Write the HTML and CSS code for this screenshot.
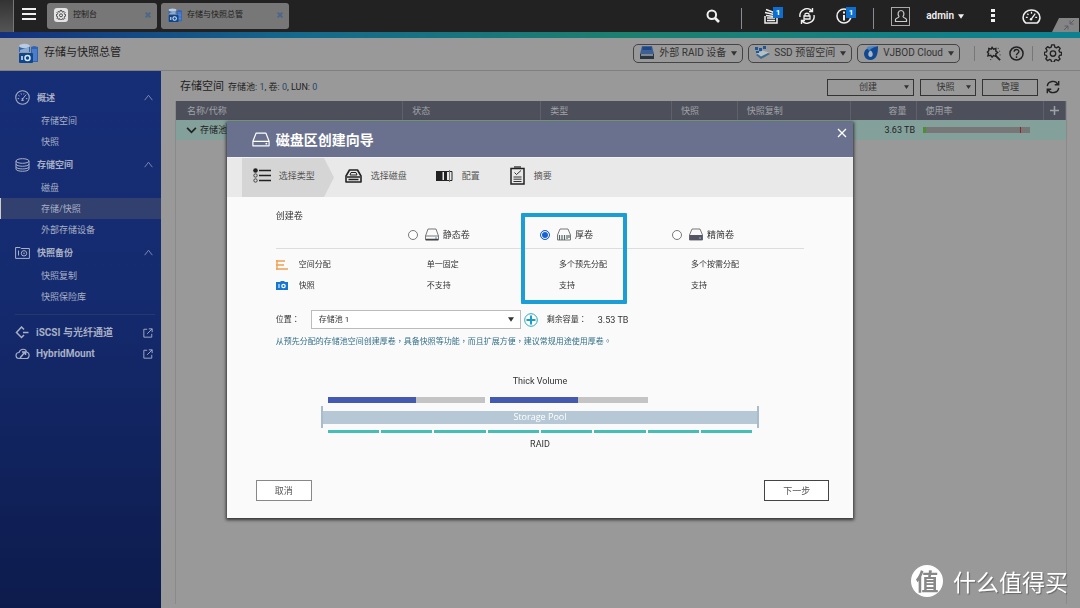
FILE: index.html
```html
<!DOCTYPE html>
<html lang="zh-CN">
<head>
<meta charset="utf-8">
<title>存储与快照总管</title>
<meta name="viewport" content="width=device-width, initial-scale=1">
<link rel="stylesheet" href="styles.css">
</head>
<body>
<svg class="defs" aria-hidden="true">
  <symbol id="i-app" viewBox="0 0 20 20">
    <path d="M1 3v6h11V3z" fill="#2a66b5"/><ellipse cx="6.500" cy="3" rx="5.500" ry="2.200" fill="#b9cbe0"/>
    <path d="M2 7l9-3v5H2z" fill="#8fa9cc"/>
    <path d="M13 4l3-1 4 1v15h-7z" fill="#2e63b8"/><path d="M14 7h5M14 9h5M14 11h5M14 13h5M14 15h5M14 17h5" stroke="#6f98d4" stroke-width="1"/>
    <rect x="1" y="10" width="14" height="10" rx="1" fill="#0d478f"/><path d="M4 13v4" stroke="#dce6f2" stroke-width="1.500"/><circle cx="9.500" cy="15" r="2.500" fill="none" stroke="#dce6f2" stroke-width="1.500"/>
  </symbol>
  <symbol id="i-gear" viewBox="0 0 20 20">
    <path d="M8.500 1h3l.5 2.500 1.800.8L16 2.900 18 5l-1.400 2.200.7 1.700 2.200.5v2.800l-2.300.5-.8 1.800 1.400 2.100-2 2-2.200-1.300-1.700.7-.5 2.300h-3l-.5-2.400-1.700-.7L4 18.500 2 16.500l1.300-2.200-.7-1.700-2.200-.5V9.300l2.300-.5.7-1.700L2 5l2-2 2.200 1.300L8 3.500z" fill="none" stroke="currentColor" stroke-width="1.500" stroke-linejoin="round"/><circle cx="10" cy="10.600" r="3" fill="none" stroke="currentColor" stroke-width="1.500"/>
  </symbol>
  <symbol id="i-gauge" viewBox="0 0 20 20">
    <circle cx="10" cy="10" r="9" fill="none" stroke="currentColor" stroke-width="1.400"/>
    <path d="M3.500 11.500h2M4.500 7l1.500 1M8 4.500l.6 1.600M12 4.500l-.4 1.400M16.500 11.500h-2M8.500 14h3M10 12l5-6" fill="none" stroke="currentColor" stroke-width="1.300"/><circle cx="10" cy="12" r="1.300" fill="currentColor"/>
  </symbol>
  <symbol id="i-halfgauge" viewBox="0 0 20 16">
    <path d="M4 15h12c2-1.500 3-3.500 3-6a9 8 0 0 0-18 0c0 2.500 1 4.500 3 6z" fill="none" stroke="currentColor" stroke-width="1.600" stroke-linejoin="round"/>
    <path d="M4 9h2M5.500 5l1.300 1.200M10 3v2M16 9h-2M9.500 11L14 5" fill="none" stroke="currentColor" stroke-width="1.400"/><circle cx="9.500" cy="11" r="1.300" fill="currentColor"/>
  </symbol>
  <symbol id="i-drive" viewBox="0 0 20 16">
    <path d="M4.500 1h11L19 10v5H1v-5zM1 10h18" fill="none" stroke="currentColor" stroke-width="1.300" stroke-linejoin="round"/><circle cx="16" cy="12.600" r="1" fill="currentColor"/>
  </symbol>
  <symbol id="i-ext" viewBox="0 0 12 12">
    <path d="M5 1.500H1v9.500h9.500V7M7 1h4v4M11 1L5 7" fill="none" stroke="currentColor" stroke-width="1.100"/>
  </symbol>
  <symbol id="i-up" viewBox="0 0 10 7"><path d="M.7 6.500L5 1l4.300 5.500" fill="none" stroke="currentColor" stroke-width="1"/></symbol>
  <symbol id="i-tri" viewBox="0 0 8 6"><path d="M0 0h8L4 6z" fill="currentColor"/></symbol>
  <symbol id="i-x" viewBox="0 0 10 10"><path d="M1 1l8 8M9 1L1 9" fill="none" stroke="currentColor" stroke-width="1.300"/></symbol>
  <symbol id="i-xb" viewBox="0 0 10 10"><path d="M1 1l8 8M9 1L1 9" fill="none" stroke="currentColor" stroke-width="3.200"/></symbol>
</svg>

<header class="topbar">
  <span class="peek"></span>
  <button class="plain burger" aria-label="主菜单"><svg viewBox="0 0 14 12" width="14" height="12"><path d="M0 1h14M0 6h14M0 11h14" stroke="currentColor" stroke-width="2"/></svg></button>
  <nav class="tabs">
    <div class="tab"><span class="tab-gear"><svg width="10" height="10"><use href="#i-gear"/></svg></span><span class="tab-name">控制台</span><button class="plain tab-x" aria-label="关闭控制台"><svg width="6" height="6"><use href="#i-xb"/></svg></button></div>
    <div class="tab tab-wide"><svg width="14" height="14"><use href="#i-app"/></svg><span class="tab-name">存储与快照总管</span><button class="plain tab-x" aria-label="关闭存储与快照总管"><svg width="6" height="6"><use href="#i-xb"/></svg></button></div>
  </nav>
  <div class="tools">
    <button class="plain" aria-label="搜索"><svg viewBox="0 0 14 14" width="14" height="14"><circle cx="5.800" cy="5.800" r="4.300" fill="none" stroke="currentColor" stroke-width="2"/><path d="M9 9l4 4" stroke="currentColor" stroke-width="2.600"/></svg></button>
    <span class="bar"></span>
    <button class="plain badged" aria-label="后台任务"><svg viewBox="0 0 15 16" width="15" height="16"><path d="M2 8v7h12V8M4 12.500h8M4 10h8M3 7.500l8 1M2 4.500l9 2M3 1.500l8 3" fill="none" stroke="currentColor" stroke-width="1.500"/></svg><span class="badge">1</span></button>
    <button class="plain" aria-label="外接设备"><svg viewBox="0 0 16 16" width="16" height="16"><path d="M1 9a7 7 0 0 1 12-6M15 7a7 7 0 0 1-12 6M13.500 0v3.500H10M2.500 16v-3.500H6" fill="none" stroke="currentColor" stroke-width="1.400"/><path d="M5 8h6v3H5zM6 8V6c0-1.200 4-1.200 4 0v2" fill="none" stroke="currentColor" stroke-width="1.300"/></svg></button>
    <button class="plain badged" aria-label="通知"><svg viewBox="0 0 16 16" width="16" height="16"><circle cx="8" cy="8" r="7" fill="none" stroke="currentColor" stroke-width="1.500"/><path d="M8 3.500v2M8 7v5.500" stroke="currentColor" stroke-width="2"/></svg><span class="badge">1</span></button>
    <span class="bar"></span>
  </div>
  <div class="account">
    <span class="avatar"><svg viewBox="0 0 14 14" width="14" height="14"><path d="M5 7.500C3.300 5 4 1.500 7 1.500S10.700 5 9 7.500c0 1.500 3.500 1.500 3.500 3v2h-11v-2c0-1.500 3.500-1.500 3.500-3z" fill="none" stroke="currentColor" stroke-width="1.200"/></svg></span>
    <button class="plain user">admin <svg width="6" height="5"><use href="#i-tri"/></svg></button>
    <button class="plain dots" aria-label="更多"><svg viewBox="0 0 4 14" width="4" height="14"><path d="M0 0h4v3H0zM0 5h4v3H0zM0 10h4v3H0z" fill="currentColor"/></svg></button>
    <button class="plain" aria-label="仪表板"><svg width="19" height="15"><use href="#i-halfgauge"/></svg></button>
  </div>
  <button class="plain corner" aria-label="还原"><svg viewBox="0 0 27 14" width="27" height="14"><path d="M7 0h20v14H0z" fill="#858585"/><path d="M12 12l4-4M12.500 8H16v3.500M22 2l-4 4M18 2.500V6h3.500" fill="none" stroke="#5c5c68" stroke-width="1"/></svg></button>
</header>
<div class="rainbow"></div>

<div class="apphead">
  <svg class="applogo" width="20" height="20"><use href="#i-app"/></svg>
  <h1>存储与快照总管</h1>
  <div class="pills">
    <button class="pill"><svg viewBox="0 0 16 14" width="16" height="14"><path d="M3 0h10l2 8H1z" fill="#3c5f94"/><path d="M3.500 1h9v3h-9z" fill="#1f4587"/><path d="M1 8h14v5H1z" fill="#2c3440"/><path d="M2 8h12v2H2z" fill="#7f8791"/></svg>外部 RAID 设备<svg class="tri" width="6" height="5"><use href="#i-tri"/></svg></button>
    <button class="pill"><svg viewBox="0 0 16 14" width="16" height="14"><path d="M2 9l8-4 6 3-9 5z" fill="#3f6a8c"/><path d="M3 7.500l6-3 6 2-8 4z" fill="#b5bfc6"/><path d="M1 1h3v3H1zM5 2h3v3H5zM9 0h3v3H9zM2 5h3v2H2z" fill="#1a5699"/></svg>SSD 预留空间<svg class="tri" width="6" height="5"><use href="#i-tri"/></svg></button>
    <button class="pill"><svg viewBox="0 0 16 14" width="16" height="14"><path d="M15 0c0 7-1 14-8 14a6 6 0 0 1-6-6c0-6 7-7 14-8z" fill="#12488f"/><path d="M4 1c3-1 6-1 11-1-3 1-7 2-9 5z" fill="#4c86c6"/><path d="M7.500 4.500c3 2 3 6 0 6.500-3-.5-3-4.500 0-6.500z" fill="#a9b8c8"/></svg>VJBOD Cloud<svg class="tri" width="6" height="5"><use href="#i-tri"/></svg></button>
  </div>
  <div class="headicons">
    <span class="sep"></span>
    <button class="plain" aria-label="向导"><svg viewBox="0 0 16 16" width="15" height="15"><path d="M6.500 1.500l1.500 2 2.500-.8v2.800l2 1.500-2 1.500v2.500L8 10.300 6.500 12 5 10l-3 .5.800-2.500L1.500 6.500 3 5V2.500l2.500.8z" fill="none" stroke="currentColor" stroke-width="1.500"/><path d="M10 10l5 5" stroke="currentColor" stroke-width="2"/><path d="M13 2v1M14.500 5v1M15 9v1M5 14v1" stroke="currentColor" stroke-width="1"/></svg></button>
    <button class="plain" aria-label="帮助"><svg viewBox="0 0 16 16" width="15" height="15"><circle cx="8" cy="8" r="7" fill="none" stroke="currentColor" stroke-width="1.600"/><path d="M5.500 6.200c0-3.200 5-3.200 5-.2 0 1.700-2.500 1.800-2.500 3.800M8 11v1.700" fill="none" stroke="currentColor" stroke-width="1.500"/></svg></button>
    <span class="sep"></span>
    <button class="plain" aria-label="设置"><svg width="18" height="18"><use href="#i-gear"/></svg></button>
  </div>
</div>

<div class="app">
  <nav class="side">
    <button class="plain group"><svg width="15" height="15"><use href="#i-gauge"/></svg><span>概述</span><svg width="9" height="7"><use href="#i-up"/></svg></button>
    <a href="#" class="sub">存储空间</a>
    <a href="#" class="sub">快照</a>
    <button class="plain group"><svg viewBox="0 0 15 14" width="15" height="14"><ellipse cx="7.500" cy="3" rx="6.500" ry="2.300" fill="none" stroke="currentColor"/><path d="M1 3v8c0 3 13 3 13 0V3M1 6c0 3 13 3 13 0M1 8.700c0 3 13 3 13 0" fill="none" stroke="currentColor"/></svg><span>存储空间</span><svg width="9" height="7"><use href="#i-up"/></svg></button>
    <a href="#" class="sub">磁盘</a>
    <a href="#" class="sub current" aria-current="page">存储/快照</a>
    <a href="#" class="sub">外部存储设备</a>
    <button class="plain group"><svg viewBox="0 0 15 13" width="15" height="13"><path d="M.6 12.400V1.500h4.500l1 1h8.300v9.900zM3.500 4.500v5" fill="none" stroke="currentColor"/><circle cx="9" cy="7.300" r="2.700" fill="none" stroke="currentColor"/><circle cx="9" cy="7.300" r=".8" fill="currentColor"/></svg><span>快照备份</span><svg width="9" height="7"><use href="#i-up"/></svg></button>
    <a href="#" class="sub">快照复制</a>
    <a href="#" class="sub">快照保险库</a>
    <hr class="rule">
    <a href="#" class="ext"><svg viewBox="0 0 15 13" width="15" height="13"><path d="M9 3.500L6.500 1 1.500 6.500l5 5L9 9M8 6.500h5.500" fill="none" stroke="currentColor" stroke-width="1.500"/></svg><span>iSCSI 与光纤通道</span><svg width="10" height="10"><use href="#i-ext"/></svg></a>
    <a href="#" class="ext"><svg viewBox="0 0 15 12" width="15" height="12"><path d="M4 10.500a3 3 0 0 1 0-6C5.500 0 11 .5 11.500 4c4 1 3 6.500 0 6.500z" fill="none" stroke="currentColor" stroke-width="1.100"/><path d="M5 10l5-6M7 4h3.500v3" fill="none" stroke="currentColor" stroke-width="1.500"/></svg><span>HybridMount</span><svg width="10" height="10"><use href="#i-ext"/></svg></a>
  </nav>

  <main class="main">
    <div class="toolbar">
      <h2>存储空间</h2>
      <p class="counts">存储池: <b>1</b>, 卷: <b>0</b>, LUN: <b>0</b></p>
      <button class="cmd cmd-wide"><span>创建</span><svg width="5" height="4"><use href="#i-tri"/></svg></button>
      <button class="cmd"><span>快照</span><svg width="5" height="4"><use href="#i-tri"/></svg></button>
      <button class="cmd"><span>管理</span></button>
      <button class="plain reload" aria-label="刷新"><svg viewBox="0 0 16 16" width="14" height="16"><path d="M1.500 7c.5-6 9.500-7.500 12-2M14.500 9c-.5 6-9.500 7.500-12 2M14.500 1v4.500H10M1.500 15v-4.500H6" fill="none" stroke="currentColor" stroke-width="1.600"/></svg></button>
    </div>
    <div class="gridwrap">
      <table class="pools">
        <colgroup><col class="c1"><col class="c2"><col class="c3"><col class="c4"><col class="c5"><col class="c6"><col><col class="c8"></colgroup>
        <thead><tr><th class="first">名称/代称</th><th>状态</th><th>类型</th><th>快照</th><th>快照复制</th><th class="num">容量</th><th>使用率</th><th class="plus" aria-label="添加列"><svg viewBox="0 0 9 9" width="9" height="9"><path d="M4.500 0v9M0 4.500h9" stroke="currentColor" stroke-width="1.500"/></svg></th></tr></thead>
        <tbody><tr><td class="name"><svg viewBox="0 0 12 8" width="11" height="7"><path d="M1 1l5 5 5-5" fill="none" stroke="currentColor" stroke-width="2"/></svg>存储池 1</td><td></td><td></td><td></td><td></td><td class="size">3.63 TB</td><td class="use"><span class="meter"><i class="ok"></i><i class="limit"></i></span></td><td></td></tr></tbody>
      </table>
    </div>
  </main>
</div>

<div class="layer">
  <section class="dialog" role="dialog" aria-labelledby="dlg">
    <header class="dlg-head">
      <svg width="18" height="15"><use href="#i-drive"/></svg>
      <h2 id="dlg">磁盘区创建向导</h2>
      <button class="plain dlg-x" aria-label="关闭"><svg width="10" height="10"><use href="#i-x"/></svg></button>
    </header>
    <ol class="steps">
      <li class="step active"><svg class="arrow" viewBox="0 0 10 39" preserveAspectRatio="none"><path d="M0 0l10 19.500L0 39z" fill="currentColor"/></svg><svg viewBox="0 0 18 15" width="18" height="15"><circle cx="2.500" cy="2.500" r="2.300" fill="#222"/><circle cx="2.500" cy="7.500" r="1.700" fill="none" stroke="#444"/><circle cx="2.500" cy="12.500" r="1.700" fill="none" stroke="#444"/><path d="M6 2.500h12M6 7.500h12M6 12.500h12" stroke="#222" stroke-width="1.300"/></svg>选择类型</li>
      <li class="step disk"><svg viewBox="0 0 17 14" width="17" height="14"><path d="M4.500 1h8L16 7v6H1V7z" fill="none" stroke="#222" stroke-width="1.600" stroke-linejoin="round"/><path d="M2 8h13M3.500 10.500h10" stroke="#222" stroke-width="1.300"/><path d="M5 6l1-2.500h5L12 6z" fill="none" stroke="#222"/></svg>选择磁盘</li>
      <li class="step conf"><svg viewBox="0 0 17 12" width="17" height="12"><path d="M0 1h6v10H0zM8 1h3v10H8z" fill="#222"/><path d="M6 1.500h10v9H6z" fill="none" stroke="#222"/><path d="M13.500 0v12" stroke="#777"/></svg>配置</li>
      <li class="step sum"><svg viewBox="0 0 15 19" width="15" height="19"><path d="M1 2.500h13V18H1z" fill="none" stroke="#222" stroke-width="1.500"/><path d="M4 1h7" stroke="#444" stroke-width="1.500"/><path d="M4.500 6.500l2 2L11 4.500M3.500 11h8M3.500 13.200h8M3.500 15.500h8" fill="none" stroke="#333"/></svg>摘要</li>
    </ol>
    <form class="dlg-body" onsubmit="return false">
      <h3>创建卷</h3>
      <div class="compare-wrap">
        <table class="compare">
          <thead><tr><td class="lead"></td>
            <th><label><input type="radio" name="vol"><svg viewBox="0 0 14 13" width="14" height="13"><path d="M3 1h8l2.500 7v4H.5V8zM.5 8h13" fill="none" stroke="#777"/><path d="M1 11.500h12" stroke="#444" stroke-width="1.500"/><circle cx="11" cy="10" r=".8" fill="#28c"/></svg>静态卷</label></th>
            <th><label><input type="radio" name="vol" checked><svg viewBox="0 0 14 13" width="14" height="13"><path d="M3 1h8l2.500 6v5H.5V7z" fill="none" stroke="#777"/><path d="M2.500 7v5M5 7v5M7.500 7v5M10 7v4M12 7v3" stroke="#566" stroke-width="1.200"/></svg>厚卷</label></th>
            <th><label><input type="radio" name="vol"><svg viewBox="0 0 14 13" width="14" height="13"><path d="M3 1h8l2.500 6v5H.5V7z" fill="none" stroke="#777"/><path d="M.5 7h13v5H.5z" fill="#556"/><circle cx="11" cy="10" r=".8" fill="#8cf"/></svg>精简卷</label></th></tr></thead>
          <tbody>
            <tr><th class="feature"><svg viewBox="0 0 12 10" width="12" height="10"><path d="M1 0v10M0 1h9M0 5h8M0 9h12" fill="none" stroke="#f0a050" stroke-width="1.400"/></svg>空间分配</th><td>单一固定</td><td>多个预先分配</td><td>多个按需分配</td></tr>
            <tr><th class="feature"><svg viewBox="0 0 12 9" width="12" height="9"><path d="M0 1h4l1-1h3l1 1h3v8H0z" fill="#1478d0"/><path d="M3 3v4" stroke="#fff"/><circle cx="7.500" cy="5" r="1.700" fill="none" stroke="#fff" stroke-width="1.200"/></svg>快照</th><td>不支持</td><td>支持</td><td>支持</td></tr>
          </tbody>
        </table>
        <div class="focusbox"></div>
      </div>
      <div class="place">
        <label for="pool">位置<span lang="zh-TW">：</span></label>
        <span class="selwrap"><select id="pool"><option>存储池 1</option></select><svg width="6" height="5"><use href="#i-tri"/></svg></span>
        <button type="button" class="plain add" aria-label="添加"><svg viewBox="0 0 14 14" width="14" height="14"><circle cx="7" cy="7" r="6.300" fill="#fff" stroke="#2aa7bb"/><path d="M7 2.500v9M2.500 7h9" stroke="#1b9dc8" stroke-width="2"/></svg></button>
        <span class="free">剩余容量<span lang="zh-TW">：</span></span><span class="freeval">3.53 TB</span>
      </div>
      <p class="note">从预先分配的存储池空间创建厚卷<span lang="zh-TW">，</span>具备快照等功能<span lang="zh-TW">，</span>而且扩展方便<span lang="zh-TW">，</span>建议常规用途使用厚卷<span lang="zh-TW">。</span></p>
      <figure class="diagram">
        <figcaption>Thick Volume</figcaption>
        <div class="vols"><i></i><i></i></div>
        <div class="poolbar"><span>Storage Pool</span></div>
        <div class="raid"><i></i><i></i><i></i><i></i><i></i><i></i><i></i><i></i></div>
        <div class="raidname">RAID</div>
      </figure>
      <footer class="actions"><button type="button" class="act">取消</button><button type="submit" class="act next">下一步</button></footer>
    </form>
  </section>
</div>
<div class="mark"><span class="disc">值</span><span>什么值得买</span></div>
</body>
</html>
```
FILE: styles.css
```css
* { box-sizing: border-box; }
body {
  margin: 0;
  min-height: 100vh;
  display: flex;
  flex-direction: column;
  background: #999;
  color: #222;
  font: 9px/12px Roboto, "Noto Sans CJK SC", sans-serif;
}
h1, h2, h3, p, figure, ol { margin: 0; padding: 0; }
svg { display: block; flex: none; }
button, select, input { font: inherit; color: inherit; }
a { color: inherit; text-decoration: none; }
.defs { position: absolute; width: 0; height: 0; }
.plain { display: flex; align-items: center; padding: 0; border: 0; background: none; }

.topbar { position: relative; display: flex; align-items: center; height: 32px; background: #222; color: #f0f0f0; }
.peek { width: 14px; height: 32px; background: linear-gradient(#333, #555); border-right: 1px solid #777; }
.burger { margin: 0 11px 4px 8px; }
.tabs { display: flex; gap: 4px; }
.tab { display: flex; align-items: center; width: 110px; height: 26px; padding: 0 6px 3px 7px; border-radius: 3px; background: #777; color: #1c1c1c; font-size: 8px; }
.tab-wide { width: 128px; }
.tab-gear { display: grid; place-items: center; width: 14px; height: 14px; border-radius: 3px; background: #e4e4e4; }
.tab-name { margin-left: 5px; padding-top: 1px; }
.tab-x { margin-left: auto; color: #4a6788; }
.tools { display: flex; align-items: center; gap: 21px; margin-left: auto; }
.bar { align-self: flex-end; width: 1px; height: 21px; margin-bottom: -5px; background: #8b8b98; }
.badged { position: relative; }
.badge { position: absolute; left: 10px; top: -1px; width: 10px; height: 11px; background: #0f6fd0; color: #fff; font-size: 8px; font-weight: 700; line-height: 11px; text-align: center; }
.account { display: flex; align-items: center; margin: 0 39px 0 17px; gap: 27px; }
.avatar { display: grid; place-items: center; width: 19px; height: 19px; margin-right: -11px; border: 1px solid #aaa; color: #ccc; }
.user { gap: 4px; font-size: 10px; font-weight: 600; }
.corner { position: absolute; right: 1px; bottom: 0; }
.rainbow { height: 6px; background: linear-gradient(90deg, #14307f, #146a8c 28%, #1c806f 58%, #0c8192); }

.apphead { display: flex; align-items: center; height: 33px; padding: 1px 18px 3px; border-bottom: 1px solid #808080; }
.apphead h1 { margin-left: 6px; font-size: 11px; font-weight: 400; line-height: 16px; }
.pills { display: flex; gap: 5px; margin-left: auto; }
.pill { display: flex; align-items: center; height: 19px; padding: 0 5px; border: 1px solid #444; border-radius: 5px; background: none; gap: 4px; font-size: 10px; color: #333; }
.tri { margin-left: 1px; }
.headicons { display: flex; align-items: center; gap: 8px; margin-left: 14px; }
.sep { width: 1px; height: 15px; margin-right: 3px; background: #777; }

.app { flex: 1; display: flex; }
.side { flex: none; width: 161px; padding-top: 14px; background: linear-gradient(#162e76, #152b70 40%, #0d1b4c); color: #a9b0c5; }
.group, .ext { display: flex; align-items: center; width: 100%; padding: 0 8px 0 15px; gap: 7px; text-align: left; font-weight: 700; }
.group { height: 25px; font-size: 9px; }
.group span, .ext span { flex: 1; }
.group svg:last-child { color: #8490b5; }
.ext { height: 21px; font-size: 10px; gap: 6px; }
.sub { display: block; height: 21px; padding: 2px 0 0 41px; line-height: 19px; }
.current { padding-left: 40px; border-left: 1px solid #ccc; background: #31406f; }
.rule { margin: 7px 6px 7px 15px; border: 0; border-top: 1px solid #26396f; }

.main { flex: 1; display: flex; flex-direction: column; padding: 8px 13px 4px 14px; }
.toolbar { display: flex; align-items: center; height: 16px; margin-bottom: 6px; padding: 0 7px 0 5px; gap: 6px; }
.toolbar h2 { font-size: 11px; font-weight: 400; }
.counts { margin: 0 auto 0 -2px; font-size: 9px; }
.counts b { font-weight: 400; color: #24476b; }
.cmd { display: flex; align-items: center; justify-content: center; width: 56px; height: 17px; padding: 0 4px; border: 1px solid #333; background: none; color: #333; }
.cmd-wide { width: 87px; }
.cmd span { flex: 1; }
.reload { margin-left: 2px; }
.gridwrap { flex: 1; border: solid #8a8a8a; border-width: 0 1px; }
.pools { width: 100%; border-collapse: collapse; table-layout: fixed; }
.c1 { width: 25.5%; } .c2 { width: 15.5%; } .c3 { width: 14.7%; } .c4 { width: 7.4%; }
.c5 { width: 12.7%; } .c6 { width: 7.4%; } .c8 { width: 22px; }
.pools th { height: 19px; padding: 0 9px; background: #4d505b; color: #a0a2a8; border-right: 1px solid #5e616b; font-weight: 400; text-align: left; }
.pools .first { padding-left: 11px; }
.pools .num { text-align: right; }
.pools .plus { padding: 0 6px; }
.pools td { height: 20px; padding: 0; background: #83a09b; }
.pools .name { display: flex; align-items: center; gap: 3px; padding-left: 10px; white-space: nowrap; }
.pools .size { padding-right: 1px; text-align: right; font-size: 9px; }
.pools .use { padding-left: 7px; }
.meter { display: flex; justify-content: space-between; width: 107px; max-width: 100%; height: 6px; padding-right: 9px; background: #777; }
.ok { width: 3px; background: #4f8f33; }
.limit { width: 1px; background: #9c2020; }

.layer { position: fixed; inset: 0; display: flex; justify-content: center; align-items: flex-start; padding-top: 122px; }
.dialog { width: 58%; background: #fafafa; box-shadow: 0 1px 3px 1px #333; color: #333; }
.dlg-head { display: flex; align-items: center; height: 35px; padding: 0 6px 0 25px; gap: 6px; background: #6a718e; color: #fff; }
.dlg-head h2 { font-size: 14px; line-height: 20px; font-weight: 700; }
.dlg-x { margin: 0 0 14px auto; }
.steps { display: flex; height: 40px; background: #e9e9e9; list-style: none; padding-left: 15px; border-top: 1px solid #f3f3f3; }
.step { position: relative; display: flex; align-items: center; padding-bottom: 4px; gap: 9px; color: #555; }
.active { width: 82px; padding-left: 11px; background: #d5d5d5; gap: 8px; }
.arrow { position: absolute; left: 100%; top: 0; width: 10px; height: 100%; color: #d5d5d5; }
.disk { margin-left: 21px; }
.conf { margin-left: 29px; }
.sum { margin-left: 30px; }
.dlg-body { padding: 13px 0 17px; }
.dlg-body h3 { margin: 0 49px; font-size: 9px; font-weight: 400; }
.compare-wrap { position: relative; margin: 0 49px; }
.compare { width: 100%; border-collapse: collapse; table-layout: fixed; font-size: 8px; }
.compare th, .compare td { height: 21px; padding: 0 0 0 19px; text-align: left; font-weight: 400; }
.compare .lead { width: 132px; }
.compare thead { border-bottom: 1px solid #ddd; }
.compare thead th, .compare thead td { height: 26px; padding: 0; font-size: 9px; }
.compare tbody tr:first-child > * { height: 27px; padding-top: 7px; }
.compare label { display: flex; align-items: center; gap: 4px; }
.compare input { appearance: none; width: 10px; height: 10px; margin: 0 3px 0 0; border: 1px solid #777; border-radius: 50%; background: #fff; }
.compare input:checked { border-color: #1a62d0; background: #1a62d0; box-shadow: inset 0 0 0 1px #fff; }
.compare .feature { padding-left: 0; }
.feature svg { float: left; margin: 1px 11px 0 0; }
.focusbox { position: absolute; left: 46.4%; top: -9px; width: 20%; height: 91px; border: 4px solid #1b9dd5; border-radius: 1px; }
.place { display: flex; align-items: center; height: 19px; margin: 14px 49px 0; font-size: 8px; }
.place label { width: 35px; }
.selwrap { position: relative; width: 210px; color: #333; }
.selwrap select { display: block; appearance: none; width: 100%; height: 19px; padding: 0 7px; border: 1px solid #bbb; border-radius: 0; background: #fff; }
.selwrap svg { position: absolute; right: 7px; top: 7px; pointer-events: none; }
.add { margin: 0 9px 0 3px; }
.freeval { margin-left: 11px; font-size: 9px; }
.note { margin: 5px 49px 0; color: #35708a; font-size: 8px; line-height: 14px; }
[lang="zh-TW"] { font-family: "Noto Sans CJK TC", sans-serif; }
.diagram { width: 70%; margin: 26px auto 0; text-align: center; }
.vols { display: flex; gap: 5px; margin: 10px 0 0 7px; width: 73%; }
.vols i { flex: 1; height: 6px; background: linear-gradient(90deg, #435ab0 56%, #c4c4c4 56%); }
.poolbar { display: flex; align-items: center; height: 22px; margin-top: 3px; border: solid #a9bccb; border-width: 0 2px; }
.poolbar span { flex: 1; background: #b6c8d6; color: #fff; font-family: "Open Sans", sans-serif; line-height: 12px; height: 13px; }
.raid { display: flex; gap: 2px; margin: 2px 7px 5px; }
.raid i { flex: 1; height: 3px; background: #45bfb5; }
.actions { display: flex; justify-content: space-between; margin: 30px 24px 0 29px; }
.act { width: 56px; height: 21px; padding: 0; border: 1px solid #888; background: #fff; color: #555; }
.next { width: 65px; border-color: #444; }

.mark { position: fixed; right: 12px; bottom: 10px; display: flex; align-items: center; gap: 10px; color: #fff; font: 23px/34px "Noto Sans CJK SC", sans-serif; text-shadow: 1px 1px 1px #666; }
.disc { width: 32px; height: 32px; border-radius: 50%; background: #fff; color: #888; font-weight: 700; line-height: 31px; text-align: center; text-shadow: none; }
```
